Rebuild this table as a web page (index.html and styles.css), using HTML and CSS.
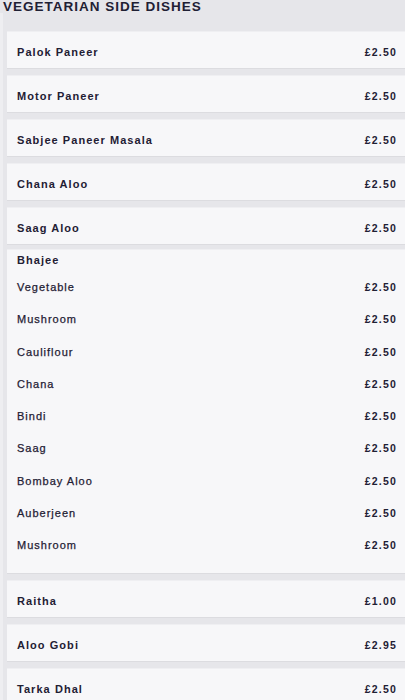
FILE: index.html
```html
<!DOCTYPE html>
<html>
<head>
<meta charset="utf-8">
<title>Vegetarian Side Dishes</title>
<link rel="stylesheet" href="styles.css">
</head>

<body>

<section class="menu-section">
  <h2 class="section-title">VEGETARIAN SIDE DISHES</h2>

  <ul class="item-list">
    <li class="card item">
      <span class="item-name">Palok Paneer</span>
      <span class="item-price">£2.50</span>
    </li>
    <li class="card item">
      <span class="item-name">Motor Paneer</span>
      <span class="item-price">£2.50</span>
    </li>
    <li class="card item">
      <span class="item-name">Sabjee Paneer Masala</span>
      <span class="item-price">£2.50</span>
    </li>
    <li class="card item">
      <span class="item-name">Chana Aloo</span>
      <span class="item-price">£2.50</span>
    </li>
    <li class="card item">
      <span class="item-name">Saag Aloo</span>
      <span class="item-price">£2.50</span>
    </li>

    <li class="card group">
      <div class="group-title">Bhajee</div>
      <ul class="sub-list">
        <li class="sub-item"><span class="sub-name">Vegetable</span><span class="item-price">£2.50</span></li>
        <li class="sub-item"><span class="sub-name">Mushroom</span><span class="item-price">£2.50</span></li>
        <li class="sub-item"><span class="sub-name">Cauliflour</span><span class="item-price">£2.50</span></li>
        <li class="sub-item"><span class="sub-name">Chana</span><span class="item-price">£2.50</span></li>
        <li class="sub-item"><span class="sub-name">Bindi</span><span class="item-price">£2.50</span></li>
        <li class="sub-item"><span class="sub-name">Saag</span><span class="item-price">£2.50</span></li>
        <li class="sub-item"><span class="sub-name">Bombay Aloo</span><span class="item-price">£2.50</span></li>
        <li class="sub-item"><span class="sub-name">Auberjeen</span><span class="item-price">£2.50</span></li>
        <li class="sub-item"><span class="sub-name">Mushroom</span><span class="item-price">£2.50</span></li>
      </ul>
    </li>

    <li class="card item">
      <span class="item-name">Raitha</span>
      <span class="item-price">£1.00</span>
    </li>
    <li class="card item">
      <span class="item-name">Aloo Gobi</span>
      <span class="item-price">£2.95</span>
    </li>
    <li class="card item">
      <span class="item-name">Tarka Dhal</span>
      <span class="item-price">£2.50</span>
    </li>
  </ul>
</section>

</body>
</html>
```

FILE: styles.css
```css
body {
  background-color: #e6e6ea;
  color: #1f2034;
  font-family: 'Liberation Sans', Arial, sans-serif;
  margin: 0;
  overflow: hidden;
  padding: 0;
}

h2,
ul,
li {
  margin: 0;
  padding: 0;
}
ul {
  list-style-type: none;
}


/* Section heading */
.section-title {
  font-size: 13.5px;
  font-weight: bold;
  letter-spacing: 1px;
  line-height: 13px;
  padding: 0 0 0 3px;
}


/* Cards */
.item-list {
  border-left: 3px solid #eeeef1;
  padding: 18px 0 0 4px;
}

.card {
  background-color: #f7f7f9;
  border-bottom: 1px solid #dcdce0;
  border-top: 1px solid #efeff2;
  margin-bottom: 6px;
}

.item {
  align-items: center;
  box-sizing: border-box;
  display: flex;
  height: 38px;
  justify-content: space-between;
  padding: 4px 8px 0 10px;
}

.item-name {
  font-size: 11px;
  font-weight: bold;
  letter-spacing: 1.05px;
}

.item-price {
  font-size: 10.5px;
  font-weight: bold;
  letter-spacing: 1.2px;
}


/* Grouped card (Bhajee) */
.group {
  margin-top: -2px;
  padding: 4px 8px 12px 10px;
}

.group-title {
  font-size: 11px;
  font-weight: bold;
  letter-spacing: 1.05px;
  line-height: 12px;
  margin-bottom: 5px;
}

.sub-item {
  align-items: center;
  display: flex;
  height: 32.25px;
  justify-content: space-between;
}

.sub-name {
  font-size: 11px;
  font-weight: normal;
  letter-spacing: 1px;
  -webkit-text-stroke: 0.25px #1f2034;
}
```
